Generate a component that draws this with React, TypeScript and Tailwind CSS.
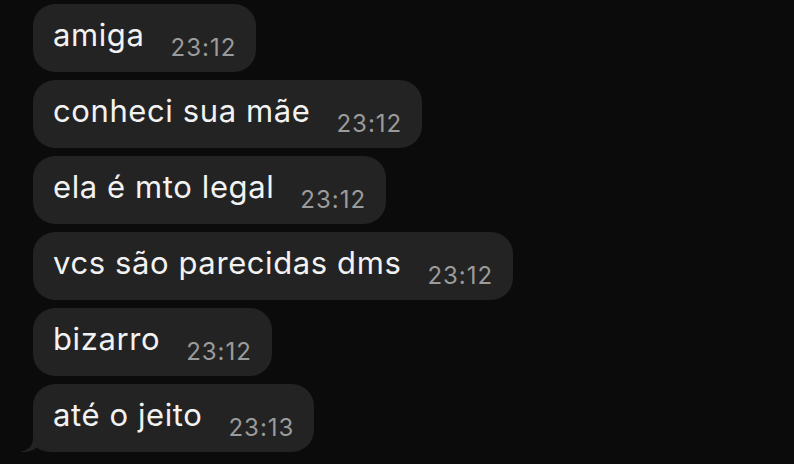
import React from "react";

const msgs = [
  { t: "amiga", h: "23:12" },
  { t: "conheci sua mãe", h: "23:12" },
  { t: "ela é mto legal", h: "23:12" },
  { t: "vcs são parecidas dms", h: "23:12" },
  { t: "bizarro", h: "23:12" },
  { t: "até o jeito", h: "23:13" },
];

export default function App() {
  return (
    <div
      className="w-[794px] h-[464px] bg-[#0b0b0b] overflow-hidden flex flex-col items-start gap-[8px] pt-[4px] pl-[33px]"
      style={{ fontFamily: "Inter, 'Liberation Sans', sans-serif" }}
    >
      {msgs.map((m, i) => (
        <div
          key={i}
          className="relative h-[68px] rounded-[22px] bg-[#232323] flex items-start pl-[20px] pr-[20px]"
        >
          {i === msgs.length - 1 && (
            <svg
              className="absolute left-[-13px] bottom-0"
              width="40"
              height="30"
              viewBox="0 0 40 30"
            >
              <path
                d="M13 0 L13 16 C13 24 8 28.5 0 29.8 C7 30.6 13 28.8 17 25.5 C21 29 27 30 34 30 L40 30 L40 0 Z"
                fill="#232323"
              />
            </svg>
          )}
          <span className="relative text-[31px] leading-[61px] text-[#f2f2f2] tracking-[0.6px] whitespace-nowrap">
            {m.t}
          </span>
          <span className="relative ml-[26px] mt-[30px] text-[24px] leading-[28px] text-[#9b9b9b] tracking-[1px] whitespace-nowrap">
            {m.h}
          </span>
        </div>
      ))}
    </div>
  );
}
